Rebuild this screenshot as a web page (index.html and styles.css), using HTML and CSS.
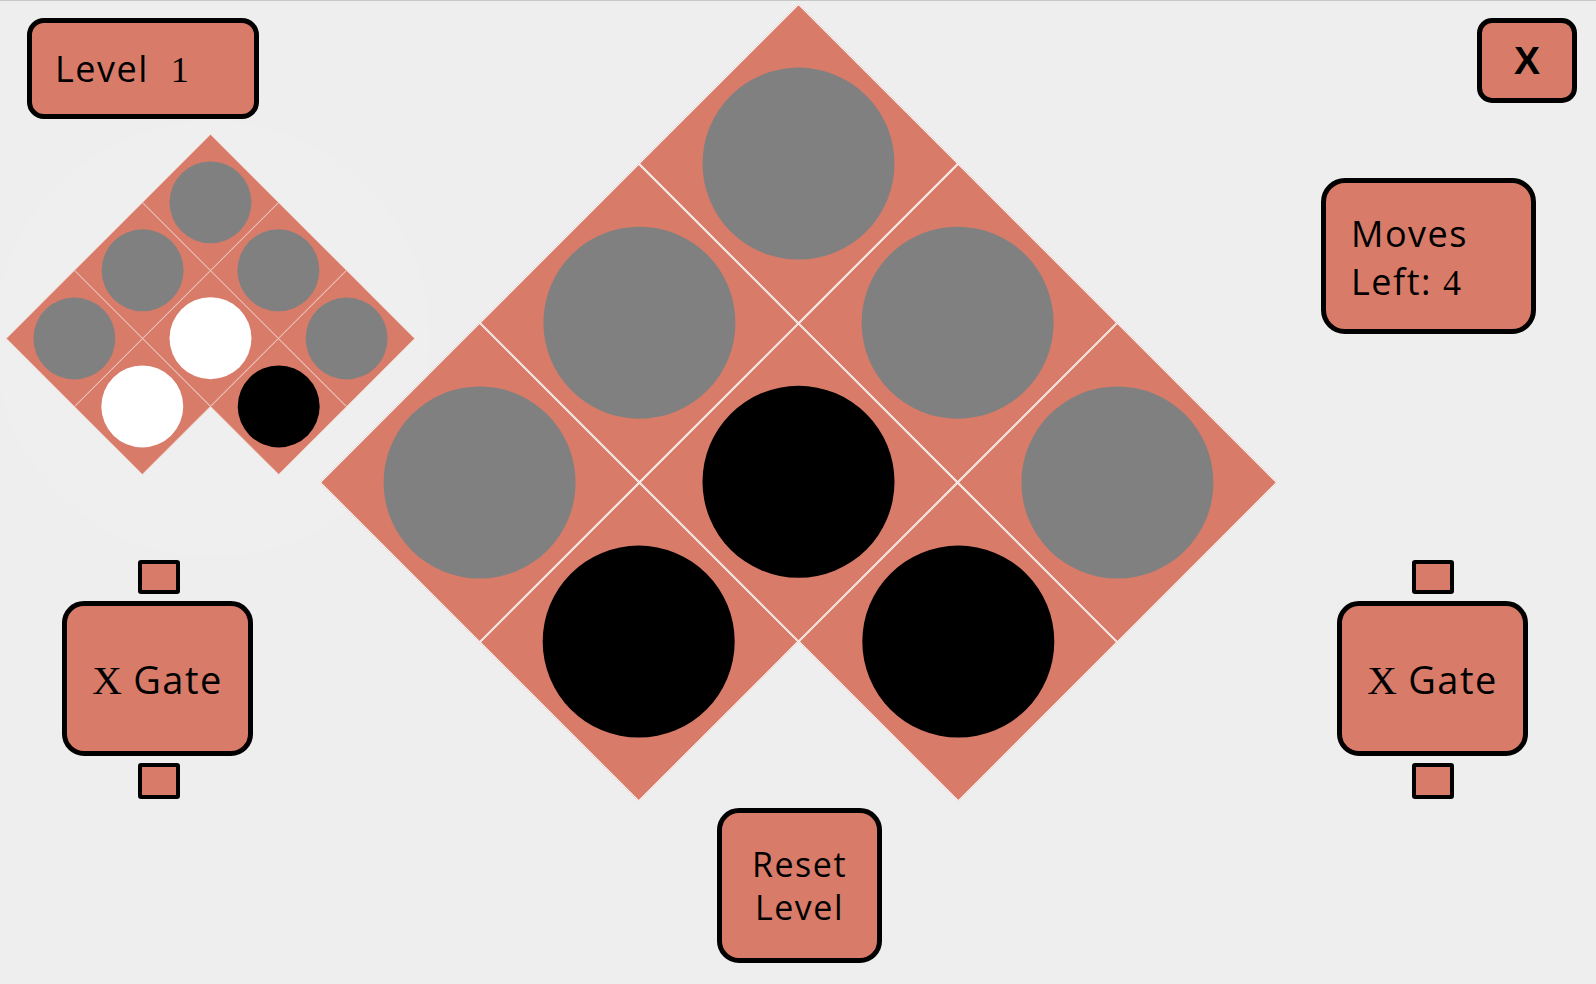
FILE: index.html
```html
<!DOCTYPE html>
<html lang="en">
<head>
<meta charset="utf-8">
<title>Level 1</title>
<link rel="stylesheet" href="styles.css">
</head>
<body>
<div class="screen">
  <div class="col col-left">
    <div class="tag level"><span class="label">Level <span class="num one">1</span></span></div>
    <div class="board-wrap small">
      <div class="board">
        <div class="cell"><div class="dot gray"></div></div>
        <div class="cell"><div class="dot gray"></div></div>
        <div class="cell"><div class="dot gray"></div></div>
        <div class="cell"><div class="dot gray"></div></div>
        <div class="cell"><div class="dot white"></div></div>
        <div class="cell"><div class="dot black"></div></div>
        <div class="cell"><div class="dot gray"></div></div>
        <div class="cell"><div class="dot white"></div></div>
        <div class="cell empty"></div>
      </div>
    </div>
    <div class="gate gate-left">
      <div class="pin"></div>
      <button class="gate-box"><span class="num">X</span> Gate</button>
      <div class="pin pin-bottom"></div>
    </div>
  </div>
  <div class="col col-center">
    <div class="board-wrap big">
      <div class="board">
        <div class="cell"><div class="dot gray"></div></div>
        <div class="cell"><div class="dot gray"></div></div>
        <div class="cell"><div class="dot gray"></div></div>
        <div class="cell"><div class="dot gray"></div></div>
        <div class="cell"><div class="dot black"></div></div>
        <div class="cell"><div class="dot black"></div></div>
        <div class="cell"><div class="dot gray"></div></div>
        <div class="cell"><div class="dot black"></div></div>
        <div class="cell empty"></div>
      </div>
    </div>
    <button class="btn reset">Reset<br>Level</button>
  </div>
  <div class="col col-right">
    <button class="btn close">X</button>
    <div class="tag moves"><span class="label">Moves<br>Left: <span class="num">4</span></span></div>
    <div class="gate gate-right">
      <div class="pin"></div>
      <button class="gate-box"><span class="num">X</span> Gate</button>
      <div class="pin pin-bottom"></div>
    </div>
  </div>
</div>
</body>
</html>
```

FILE: styles.css
```css
* { box-sizing: border-box; }

html, body {
  margin: 0;
  padding: 0;
  background: #eeeeee;
}

body {
  font-family: "Open Sans", "Noto Sans", sans-serif;
  font-weight: 500;
  letter-spacing: 0.095em;
  color: #000;
}

.screen {
  width: 1596px;
  height: 984px;
  border-top: 1px solid #c8c8c8;
  display: grid;
  grid-template-columns: 322px 952px 322px;
  overflow: hidden;
}

.col {
  display: flex;
  flex-direction: column;
  align-items: flex-start;
  min-width: 0;
}

.col-center { align-items: center; padding-top: 4px; }

.num {
  font-family: "Liberation Serif", "Times New Roman", serif;
  font-weight: 400;
  letter-spacing: 0;
}

.tag, .btn, .gate-box, .pin {
  background: #d87b69;
  border: 5px solid #000;
}

.btn, .gate-box {
  font-family: inherit;
  font-weight: inherit;
  letter-spacing: inherit;
  color: #000;
  padding: 0;
  cursor: pointer;
  white-space: nowrap;
}

.tag { white-space: nowrap; }

/* Level label */
.level {
  margin: 17px 0 0 27px;
  width: 232px;
  height: 101px;
  border-radius: 17px;
  display: flex;
  align-items: center;
  padding-left: 23px;
  font-size: 36px;
}
.level .one { margin-left: 11px; }

/* boards */
.board-wrap {
  display: flex;
  justify-content: center;
  flex: none;
}

.board {
  flex: none;
  width: 677px;
  height: 677px;
  display: grid;
  grid-template-columns: repeat(3, 1fr);
  grid-template-rows: repeat(3, 1fr);
  transform: rotate(45deg);
}

.cell {
  background: #d87b69;
  border: 1px solid #ffffff;
  display: flex;
  align-items: center;
  justify-content: center;
}
.cell.empty { background: transparent; border: none; }

.dot {
  width: 192px;
  height: 192px;
  border-radius: 50%;
}
.dot.gray { background: #808080; }
.dot.black { background: #000; }
.dot.white { background: #fff; }

.small {
  position: relative;
  margin: 16px 0 0 6px;
  width: 408px;
  height: 406px;
  align-items: center;
}
.small::before {
  content: "";
  position: absolute;
  left: -12px;
  top: -14px;
  width: 436px;
  height: 436px;
  border-radius: 50%;
  background: #efefef;
}
.small .board { transform: rotate(45deg) scale(0.4268); }
.small .cell { border-width: 1.5px; }

.big {
  width: 952px;
  height: 795px;
  align-items: flex-start;
}
.big .board { margin-top: 139px; }

/* reset */
.reset {
  margin: 8px 0 0 3px;
  width: 165px;
  height: 155px;
  border-radius: 22px;
  font-size: 34px;
  line-height: 43px;
}

/* close */
.close {
  margin: 17px 0 0 203px;
  width: 100px;
  height: 85px;
  border-radius: 15px;
  font-family: "Liberation Sans", Arial, sans-serif;
  font-weight: 700;
  letter-spacing: 0;
  font-size: 39px;
  line-height: 1;
}

/* moves */
.moves {
  margin: 75px 0 0 47px;
  width: 215px;
  height: 156px;
  border-radius: 24px;
  display: flex;
  align-items: center;
  padding-left: 25px;
  padding-top: 4px;
  font-size: 36px;
  line-height: 48px;
}

/* gates */
.gate {
  display: flex;
  flex-direction: column;
  align-items: center;
  width: 191px;
}
.gate-left { margin: 19px 0 0 62px; }
.gate-right { margin: 226px 0 0 63px; }

.pin {
  width: 42px;
  height: 34px;
  border-width: 4px;
  border-radius: 3px;
}
.gate-left .pin { margin-left: 3px; }
.pin-bottom { height: 36px; }

.gate-box {
  width: 191px;
  height: 155px;
  margin: 7px 0;
  border-radius: 22px;
  font-size: 38px;
}
.gate-box .num { font-size: 41px; }
```
